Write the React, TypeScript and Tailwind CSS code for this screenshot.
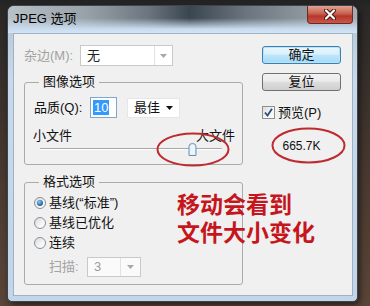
import React from "react";

function Arrow({ color }: { color: string }) {
  return (
    <svg width="7" height="4" viewBox="0 0 7 4">
      <path d="M0 0h7L3.5 4z" fill={color} />
    </svg>
  );
}

function Radio({ checked }: { checked?: boolean }) {
  return (
    <span className="flex h-[12px] w-[12px] shrink-0 items-center justify-center rounded-full border border-[#8c8f94] bg-[linear-gradient(135deg,#d6d9dd_0%,#f4f5f6_60%,#ffffff_100%)]">
      {checked && (
        <span className="h-[6px] w-[6px] rounded-full bg-[radial-gradient(circle_at_40%_35%,#8fd0f0_0%,#2b6fa8_55%,#1b4a78_100%)]" />
      )}
    </span>
  );
}

export default function App() {
  return (
    <div className="h-[306px] w-[370px] overflow-hidden bg-[linear-gradient(180deg,#232323_0px,#2a2827_8px,#4a3a30_60%,#5a4538_100%)] pl-[7px] pt-[5px] font-['Liberation_Sans','Noto_Sans_CJK_SC',sans-serif] text-[13px] leading-[16px] text-[#111]">
      <div className="flex h-[297px] w-[351px] flex-col rounded-t-[7px] rounded-b-[5px] border border-[#3a4550] bg-[linear-gradient(180deg,#b7c4cf_0%,#c7d9eb_25%,#c2d5e9_100%)] shadow-[2px_3px_6px_rgba(0,0,0,0.55)]">
        {/* title bar */}
        <div className="flex h-[27px] items-start justify-between rounded-t-[6px] bg-[linear-gradient(180deg,rgba(200,220,240,0)_0%,rgba(200,220,240,0)_45%,#c9dcef_85%,#d3e3f3_100%),linear-gradient(90deg,#b9c1c8_0%,#9aa2a9_22%,#6d767f_40%,#3a4550_52%,#6b747d_68%,#8f979e_85%,#a4acb3_100%)]">
          <span className="pl-[5px] pt-[5px] text-[13px] leading-[16px] text-black">JPEG 选项</span>
          <div className="mr-[4px] flex h-[18px] w-[46px] items-center justify-center rounded-b-[4px] border border-t-0 border-[#6b2a24] bg-[linear-gradient(180deg,#e0a394_0%,#c8604f_45%,#b5372a_60%,#c9584a_100%)]">
            <svg width="12" height="11" viewBox="0 0 12 11">
              <path d="M2 1.5l8 8M10 1.5l-8 8" stroke="#4a1510" strokeWidth="4" strokeLinecap="round" />
              <path d="M2 1.5l8 8M10 1.5l-8 8" stroke="#ffffff" strokeWidth="2.2" strokeLinecap="round" />
            </svg>
          </div>
        </div>

        {/* client area */}
        <div className="relative ml-[5px] flex h-[263px] w-[340px] bg-[#f0f0f0] shadow-[inset_0_0_0_1px_#9fb1c3]">
          <div className="w-[230px] shrink-0 pl-[11px] pt-[12px]">
            <div className="flex h-[21px] items-center">
              <span className="w-[56px] text-[#a3a3a3]">杂边(M):</span>
              <div className="flex h-[21px] w-[93px] items-center border border-[#c9c9c9] bg-white">
                <span className="flex-1 pl-[6px] text-[#222]">无</span>
                <span className="flex h-full w-[18px] items-center justify-center border-l border-[#e2e2e2]">
                  <Arrow color="#a8a8a8" />
                </span>
              </div>
            </div>

            <fieldset className="mt-[8px] h-[91px] w-[219px] rounded-[3px] border border-[#a9abad]">
              <legend className="ml-[14px] px-[4px]">图像选项</legend>
              <div className="mt-[7px] flex h-[21px] items-center pl-[9px]">
                <span className="w-[56px]">品质(Q):</span>
                <div className="flex h-[21px] w-[27px] items-center border border-[#7fa5d1] bg-white pl-[2px]">
                  <span className="bg-[#3399ff] px-[1px] leading-[15px] text-white">10</span>
                </div>
                <div className="ml-[10px] flex h-[20px] w-[53px] items-center justify-between border border-[#e6e6e6] bg-white pl-[6px] pr-[6px]">
                  <span>最佳</span>
                  <Arrow color="#111" />
                </div>
              </div>
              <div className="mt-[10px] flex h-[16px] items-center justify-between pl-[8px] pr-[7px]">
                <span>小文件</span>
                <span>大文件</span>
              </div>
              <div className="relative ml-[15px] mt-[-1px] h-[12px] w-[182px]">
                <div className="absolute left-0 right-0 top-[5px] h-[2px] border-t border-[#a7a7a7] bg-white" />
                <svg className="absolute left-[148px] top-0" width="9" height="13" viewBox="0 0 9 13">
                  <path d="M1 3.5Q1 0.5 4.5 0.5Q8 0.5 8 3.5V12.5H1Z" fill="#d9ecf8" stroke="#6f8fae" />
                  <path d="M2 4Q2 1.5 4.5 1.5Q7 1.5 7 4V11.5H2Z" fill="#eaf5fc" />
                </svg>
              </div>
            </fieldset>

            <fieldset className="mt-[9px] h-[111px] w-[219px] rounded-[3px] border border-[#a9abad]">
              <legend className="ml-[14px] px-[4px]">格式选项</legend>
              <div className="mt-[3px] pl-[9px]">
                <div className="flex h-[20px] items-center gap-[3px]">
                  <Radio checked />
                  <span>基线(“标准”)</span>
                </div>
                <div className="flex h-[20px] items-center gap-[3px]">
                  <Radio />
                  <span>基线已优化</span>
                </div>
                <div className="flex h-[20px] items-center gap-[3px]">
                  <Radio />
                  <span>连续</span>
                </div>
              </div>
              <div className="mt-[4px] flex h-[20px] items-center pl-[24px]">
                <span className="w-[38px] text-[#a3a3a3]">扫描:</span>
                <div className="flex h-[20px] w-[54px] items-center border border-[#c9c9c9] bg-[#fafafa]">
                  <span className="flex-1 pl-[6px] text-[#9a9a9a]">3</span>
                  <span className="flex h-full w-[20px] items-center justify-center border-l border-[#e2e2e2]">
                    <Arrow color="#a8a8a8" />
                  </span>
                </div>
              </div>
            </fieldset>
          </div>

          <div className="ml-[19px] w-[79px] pt-[13px]">
            <div className="flex h-[18px] items-center justify-center rounded-[3px] border border-[#3c7fb1] bg-[linear-gradient(180deg,#eaf6fd_0%,#d9f0fc_45%,#bee6fd_50%,#a7d9f5_100%)] shadow-[inset_0_0_0_1px_#b8e4f8]">
              确定
            </div>
            <div className="mt-[9px] flex h-[18px] items-center justify-center rounded-[3px] border border-[#707070] bg-[linear-gradient(180deg,#f2f2f2_0%,#ebebeb_45%,#dddddd_50%,#cfcfcf_100%)]">
              复位
            </div>
            <div className="mt-[15px] flex h-[13px] items-center gap-[3px]">
              <span className="flex h-[13px] w-[13px] shrink-0 items-center justify-center border border-[#8e8f8f] bg-[linear-gradient(135deg,#dcdcdc_0%,#f7f7f7_60%,#ffffff_100%)]">
                <svg width="9" height="9" viewBox="0 0 9 9">
                  <path d="M1 4.5L3.5 7.5L8 0.8" fill="none" stroke="#2a4c7c" strokeWidth="1.8" />
                </svg>
              </span>
              <span>预览(P)</span>
            </div>
            <div className="mt-[19px] text-center text-[12px] leading-[16px]">665.7K</div>
          </div>

          {/* annotations */}
          <svg className="absolute left-[143px] top-[99px]" width="74" height="35" viewBox="0 0 74 35">
            <ellipse cx="37" cy="17.5" rx="35.5" ry="16" fill="none" stroke="#be2a2e" strokeWidth="2" />
          </svg>
          <svg className="absolute left-[258px] top-[94px]" width="75" height="37" viewBox="0 0 75 37">
            <ellipse cx="37.5" cy="18.5" rx="36" ry="17" fill="none" stroke="#be2a2e" strokeWidth="2" />
          </svg>
          <div className="absolute left-[164px] top-[156px] font-['Noto_Sans_CJK_SC',sans-serif] text-[23px] font-bold leading-[28px] text-[#c5161d]">
            <div>移动会看到</div>
            <div>文件大小变化</div>
          </div>
        </div>
      </div>
    </div>
  );
}
